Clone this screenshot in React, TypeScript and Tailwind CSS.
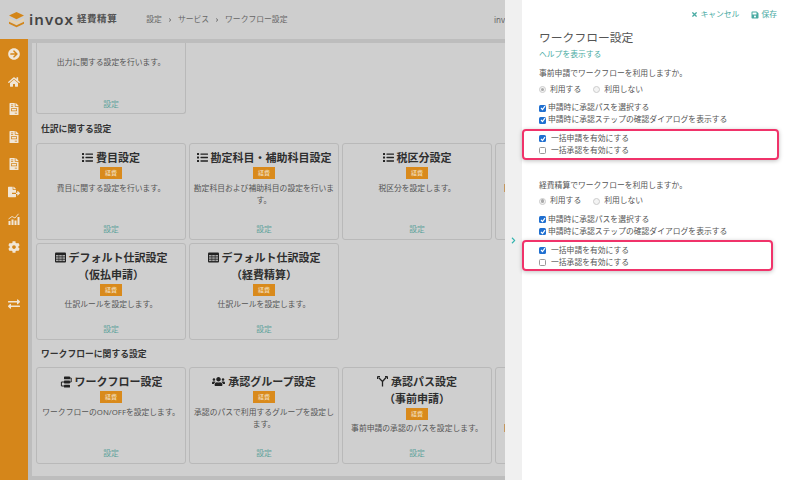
import React from 'react';
import {
  FaArrowCircleRight,
  FaHome,
  FaFileInvoice,
  FaFileExport,
  FaCog,
  FaExchangeAlt,
  FaList,
  FaUsers,
  FaTimes,
  FaSave,
  FaChevronRight,
} from 'react-icons/fa';

const FONT = "font-['Noto_Sans','Noto_Sans_CJK_JP',sans-serif]";

const Logo = () => (
  <svg width="17" height="17" viewBox="0 0 17 17">
    <path d="M8.5 1 L16 4.6 L8.5 8.2 L1 4.6 Z" fill="#d3861a" />
    <path d="M1 7.2 L8.5 10.8 L16 7.2 L16 10 L8.5 13.4 L1 10 Z" fill="#e6d2b0" />
    <path d="M1 10.8 L8.5 14.2 L16 10.8 L16 12.8 L8.5 16.2 L1 12.8 Z" fill="#d3861a" />
  </svg>
);

const ChartIcon = () => (
  <svg width="12" height="12" viewBox="0 0 12 12" fill="#f1e6d6">
    <rect x="0.5" y="8" width="2" height="4" />
    <rect x="3.5" y="6.5" width="2" height="5.5" />
    <rect x="6.5" y="7.5" width="2" height="4.5" />
    <rect x="9.5" y="4" width="2" height="8" />
    <path d="M0.5 6 L4 3.5 L7 5 L10.5 0.8" fill="none" stroke="#f1e6d6" strokeWidth="0.9" />
  </svg>
);

const TableIcon = () => (
  <svg width="11" height="11" viewBox="0 0 11 11">
    <rect x="0" y="0.5" width="11" height="10" rx="1" fill="#222" />
    {[3, 5.3, 7.6].map((y) =>
      [1, 4.2, 7.4].map((x) => <rect key={`${x}-${y}`} x={x} y={y} width="2.6" height="1.5" fill="#a8a8a8" />),
    )}
  </svg>
);

const WorkflowIcon = () => (
  <svg width="12" height="12" viewBox="0 0 12 12" fill="#222">
    <rect x="4" y="0.5" width="6" height="2.8" rx="0.6" />
    <rect x="4" y="4.6" width="6" height="2.8" rx="0.6" />
    <rect x="4" y="8.7" width="6" height="2.8" rx="0.6" />
    <path d="M10 2 h1.2 v4 h-1.2 M4 6 h-2.6 v4 h2.6" fill="none" stroke="#222" strokeWidth="1" />
  </svg>
);

const PathIcon = () => (
  <svg width="11" height="11" viewBox="0 0 11 11" fill="none" stroke="#222" strokeWidth="1.3">
    <path d="M1.5 1.5 L5.5 5.5 L5.5 10.5 M9.5 1 L5.5 5.5" />
    <path d="M0.5 3 V0.5 H3 M8 0.5 H10.5 V3" strokeWidth="1" />
  </svg>
);

const listIcon = <FaList className="text-[11px] text-[#222]" />;

type CardProps = {
  icon: React.ReactNode;
  title: string;
  sub?: string;
  desc: string;
};

const Badge = () => (
  <span className="mt-[1px] w-[22px] h-[12px] flex items-center justify-center bg-[#d98a1c] text-[6px] text-[#f3e2c8]">経費</span>
);

const Card = ({ icon, title, sub, desc }: CardProps) => (
  <div className="w-[150px] h-full shrink-0 flex flex-col items-center rounded-[3px] border border-[#b9b9b9] px-[3px] pt-[5px] pb-[4px]">
    <div className="flex items-center gap-[3px] text-[11px] leading-[17px] font-bold text-[#2e2e2e] whitespace-nowrap">
      {icon}
      <span>{title}</span>
    </div>
    {sub && <div className="text-[11px] leading-[17px] font-bold text-[#2e2e2e] whitespace-nowrap">{sub}</div>}
    <Badge />
    <p className={`${sub ? 'mt-[1.5px]' : 'mt-[3px]'} text-[7.8px] leading-[12px] text-[#555] text-center`}>{desc}</p>
    <a className="mt-auto text-[7.8px] leading-[12px] text-[#5fa39c]">設定</a>
  </div>
);

// card cut off by the drawer, only its left edge shows
const ClippedCard = ({ markClass }: { markClass: string }) => (
  <div className="w-[150px] h-full shrink-0 rounded-[3px] border border-[#b9b9b9] pl-[8px]">
    <div className={`w-[3px] h-[8px] bg-[#c4975e] ${markClass}`} />
  </div>
);

const Section = ({ children }: { children: React.ReactNode }) => (
  <h3 className="pl-[5px] text-[8.8px] leading-[12px] font-bold text-[#333]">{children}</h3>
);

const Check = ({ on, label, wide }: { on: boolean; label: string; wide?: boolean }) => (
  <label className={`flex items-center h-[12px] text-[7.8px] text-[#555] whitespace-nowrap ${wide ? 'gap-[5px]' : 'gap-[2px]'}`}>
    {on ? (
      <span className="w-[7px] h-[7px] rounded-[1.5px] bg-[#1f6fd0] flex items-center justify-center">
        <svg width="6" height="6" viewBox="0 0 6 6" fill="none" stroke="#fff" strokeWidth="1.2">
          <path d="M1 3 L2.5 4.5 L5 1.2" />
        </svg>
      </span>
    ) : (
      <span className="w-[7px] h-[7px] rounded-[1.5px] border border-[#999] bg-white" />
    )}
    {label}
  </label>
);

const Radio = ({ on, label }: { on: boolean; label: string }) => (
  <label className="flex items-center gap-[4px] text-[7.8px] text-[#555]">
    <span className="w-[7px] h-[7px] rounded-full border border-[#ccc] bg-[#f4f4f4] flex items-center justify-center">
      {on && <span className="w-[3.5px] h-[3.5px] rounded-full bg-[#aaa]" />}
    </span>
    {label}
  </label>
);

const WorkflowBlock = ({ question, boxWidth }: { question: string; boxWidth: string }) => (
  <div>
    <p className="text-[7.8px] leading-[12px] text-[#555]">{question}</p>
    <div className="mt-[4.5px] flex gap-[12px]">
      <Radio on label="利用する" />
      <Radio on={false} label="利用しない" />
    </div>
    <div className="mt-[7px]">
      <Check on label="申請時に承認パスを選択する" />
      <Check on label="申請時に承認ステップの確認ダイアログを表示する" />
    </div>
    <div className={`mt-[2.5px] -ml-[17px] h-[31px] pl-[15px] pt-[1px] flex flex-col justify-center rounded-[4px] border-[2px] border-[#f0336a] shadow-[0_1px_4px_rgba(0,0,0,0.25)] ${boxWidth}`}>
      <Check wide on label="一括申請を有効にする" />
      <Check wide on={false} label="一括承認を有効にする" />
    </div>
  </div>
);

const sideItems = [
  <FaHome />,
  <FaFileInvoice />,
  <FaFileInvoice />,
  <FaFileInvoice />,
  <FaFileExport />,
  <ChartIcon />,
  <FaCog />,
];

export default function App() {
  return (
    <div className={`w-[800px] h-[480px] flex overflow-hidden bg-white ${FONT}`}>
      {/* dimmed page behind the drawer */}
      <div className="w-[505px] h-full shrink-0 flex flex-col bg-[#cecece] overflow-hidden">
        <header className="h-[39px] shrink-0 flex items-center pl-[8px]">
          <Logo />
          <span className="ml-[4px] text-[15px] font-semibold tracking-[1.1px] text-[#444]">invox</span>
          <span className="ml-[3px] text-[9.5px] font-bold tracking-[0.6px] text-[#555]">経費精算</span>
          <nav className="ml-[29px] flex items-center gap-[6px] text-[7.8px] text-[#666]">
            <span>設定</span>
            <FaChevronRight className="text-[4px]" />
            <span>サービス</span>
            <FaChevronRight className="text-[4px]" />
            <span>ワークフロー設定</span>
          </nav>
          <span className="ml-auto text-[8px] text-[#666] w-[11px] overflow-hidden">inv</span>
        </header>
        <div className="flex-1 flex min-h-0">
          <aside className="w-[28px] shrink-0 bg-[#d5861a] flex flex-col items-center pt-[9px] text-[#f1e6d6]">
            <FaArrowCircleRight className="text-[12px] mb-[8px]" />
            {sideItems.map((item, i) => (
              <div key={i} className="h-[27.5px] flex items-center justify-center text-[12px]">
                {item}
              </div>
            ))}
            <FaExchangeAlt className="mt-[37px] text-[12px]" />
          </aside>
          <main className="flex-1 min-w-0 bg-[#bdbdbd] pl-[4px] pt-[4px] pb-[4px]">
            <div className="h-full bg-[#cfcfcf] pl-[4px] overflow-hidden flex flex-col">
              <div className="w-[150px] h-[71px] shrink-0 flex flex-col items-center rounded-b-[3px] border border-t-0 border-[#b9b9b9] pb-[3px] pt-[13px]">
                <p className="text-[7.8px] leading-[12px] text-[#555]">出力に関する設定を行います。</p>
                <a className="mt-auto text-[7.8px] leading-[12px] text-[#5fa39c]">設定</a>
              </div>
              <div className="mt-[9px]"><Section>仕訳に関する設定</Section></div>
              <div className="mt-[8px] h-[97px] shrink-0 flex gap-[3px]">
                <Card icon={listIcon} title="費目設定" desc="費目に関する設定を行います。" />
                <Card icon={listIcon} title="勘定科目・補助科目設定" desc="勘定科目および補助科目の設定を行います。" />
                <Card icon={listIcon} title="税区分設定" desc="税区分を設定します。" />
                <ClippedCard markClass="mt-[40px]" />
              </div>
              <div className="mt-[3px] h-[97px] shrink-0 flex gap-[3px]">
                <Card icon={<TableIcon />} title="デフォルト仕訳設定" sub="（仮払申請）" desc="仕訳ルールを設定します。" />
                <Card icon={<TableIcon />} title="デフォルト仕訳設定" sub="（経費精算）" desc="仕訳ルールを設定します。" />
              </div>
              <div className="mt-[8px]"><Section>ワークフローに関する設定</Section></div>
              <div className="mt-[7px] h-[97px] shrink-0 flex gap-[3px]">
                <Card icon={<WorkflowIcon />} title="ワークフロー設定" desc="ワークフローのON/OFFを設定します。" />
                <Card icon={<FaUsers className="text-[13px] text-[#222]" />} title="承認グループ設定" desc="承認のパスで利用するグループを設定します。" />
                <Card icon={<PathIcon />} title="承認パス設定" sub="（事前申請）" desc="事前申請の承認のパスを設定します。" />
                <ClippedCard markClass="mt-[56px]" />
              </div>
            </div>
          </main>
        </div>
      </div>

      {/* drawer */}
      <div className="w-[17px] h-full shrink-0 bg-[#f0f0f0] flex items-center justify-center">
        <FaChevronRight className="text-[7px] text-[#2fb3ad] mt-[1px]" />
      </div>
      <div className="flex-1 h-full bg-white pl-[17px] pr-[23px] pt-[9px]">
        <div className="flex justify-end gap-[12px] pr-[2px] text-[7.8px] leading-[11px] text-[#48aaa2]">
          <span className="flex items-center gap-[2px]"><FaTimes className="text-[7px]" />キャンセル</span>
          <span className="flex items-center gap-[2px]"><FaSave className="text-[8px]" />保存</span>
        </div>
        <h2 className="mt-[9px] text-[11.8px] leading-[17px] text-[#555]">ワークフロー設定</h2>
        <a className="block mt-[2px] text-[7.8px] leading-[12px] text-[#48aaa2]">ヘルプを表示する</a>
        <div className="mt-[7px]">
          <WorkflowBlock question="事前申請でワークフローを利用しますか。" boxWidth="w-[257px]" />
        </div>
        <div className="mt-[19px]">
          <WorkflowBlock question="経費精算でワークフローを利用しますか。" boxWidth="w-[251px]" />
        </div>
      </div>
    </div>
  );
}
